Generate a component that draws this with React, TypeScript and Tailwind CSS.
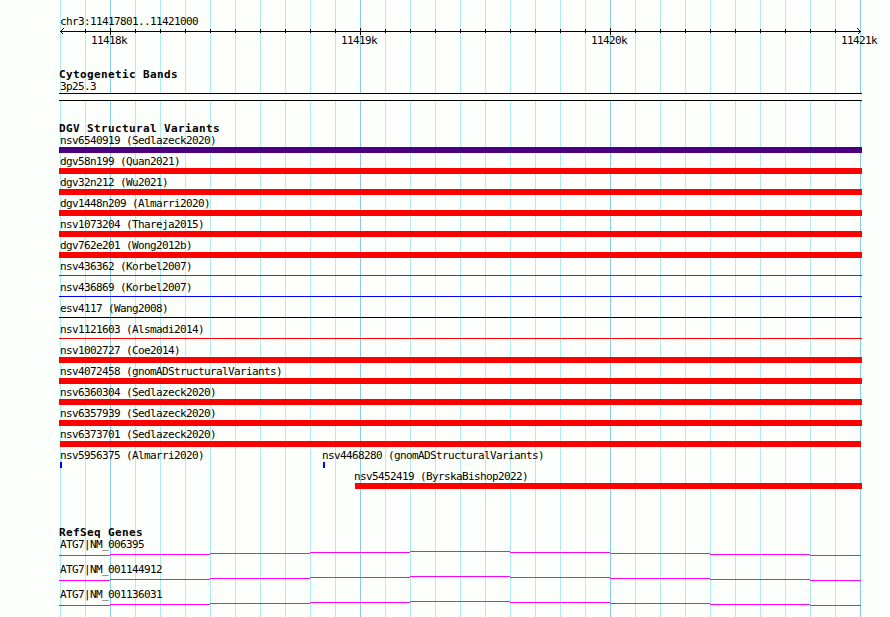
import clsx from "clsx"
import { ReactNode } from "react"

interface Variant {
	name: string
	color: string
	thin?: boolean
	bar?: string
}

const variants: Variant[] = [
	{ name: "nsv6540919 (Sedlazeck2020)", color: "bg-[#4b0082]" },
	{ name: "dgv58n199 (Quan2021)", color: "bg-[#ff0000]" },
	{ name: "dgv32n212 (Wu2021)", color: "bg-[#ff0000]" },
	{ name: "dgv1448n209 (Almarri2020)", color: "bg-[#ff0000]" },
	{ name: "nsv1073204 (Thareja2015)", color: "bg-[#ff0000]" },
	{ name: "dgv762e201 (Wong2012b)", color: "bg-[#ff0000]" },
	{ name: "nsv436362 (Korbel2007)", color: "bg-[#ff0000]", thin: true },
	{ name: "nsv436869 (Korbel2007)", color: "bg-[#0000ff]", thin: true },
	{ name: "esv4117 (Wang2008)", color: "bg-black", thin: true },
	{ name: "nsv1121603 (Alsmadi2014)", color: "bg-[#ff0000]", thin: true },
	{ name: "nsv1002727 (Coe2014)", color: "bg-[#ff0000]" },
	{ name: "nsv4072458 (gnomADStructuralVariants)", color: "bg-[#ff0000]" },
	{ name: "nsv6360304 (Sedlazeck2020)", color: "bg-[#ff0000]" },
	{ name: "nsv6357939 (Sedlazeck2020)", color: "bg-[#ff0000]" },
	{ name: "nsv6373701 (Sedlazeck2020)", color: "bg-[#ff0000]", bar: "ml-px w-[801px]" },
]

const genes = ["ATG7|NM_006395", "ATG7|NM_001144912", "ATG7|NM_001136031"]

// 25px per 100bp, every tenth line is a 1kb mark
const gridLines = Array.from({ length: 33 }, (_, i) => ({ id: i, major: i % 10 === 2 }))

export default function App() {
	return (
		<div className="relative h-[617px] w-[890px] overflow-hidden bg-[#fdfffc] font-['DejaVu_Sans_Mono',monospace] text-[11px] leading-[13px] tracking-[-0.622px] text-black">
			<Grid />
			<div className="relative flex flex-col pt-[15px] pl-[59px]">
				<Ruler />
				<Track caption="Cytogenetic Bands" className="mt-[21px]">
					<Label>3p25.3</Label>
					<div className="h-2 w-[803px] border-y border-black bg-[#fdfffc]" />
				</Track>
				<Track caption="DGV Structural Variants" className="mt-[21px]">
					{variants.map((v) => (
						<VariantRow key={v.name} variant={v} />
					))}
					<div className="flex">
						<div className="w-[262px]">
							<VariantRow variant={{ name: "nsv5956375 (Almarri2020)", color: "bg-[#0000ff]", bar: "ml-px w-0.5" }} />
						</div>
						<VariantRow
							variant={{ name: "nsv4468280 (gnomADStructuralVariants)", color: "bg-[#0000ff]", bar: "ml-0.5 w-0.5" }}
						/>
					</div>
					<div className="pl-[294px]">
						<VariantRow
							variant={{ name: "nsv5452419 (ByrskaBishop2022)", color: "bg-[#ff0000]", bar: "ml-0.5 w-[507px]" }}
						/>
					</div>
				</Track>
				<Track caption="RefSeq Genes" className="mt-[35px]">
					{genes.map((gene) => (
						<GeneRow key={gene} name={gene} />
					))}
				</Track>
			</div>
		</div>
	)
}

function Grid() {
	return (
		<div className="absolute inset-0 flex pl-[60px]">
			{gridLines.map((line) => (
				<div
					key={line.id}
					className={clsx("w-[25px] shrink-0 border-l", line.major ? "border-[#87ceeb]" : "border-[#afeeee]")}
				/>
			))}
		</div>
	)
}

function Ruler() {
	return (
		<div>
			<Label>chr3:11417801..11421000</Label>
			<svg className="block h-[7px] w-[803px]" viewBox="0 0 803 7" shapeRendering="crispEdges">
				<path d="M1 3.5H802" stroke="black" />
				{gridLines.slice(1, -1).map(({ id, major }) => (
					<rect key={id} x={1 + id * 25} y={major ? 0 : 1} width={1} height={major ? 7 : 4} />
				))}
				<path d="M4.5 0.5L1.5 3.5L4.5 6.5M798.5 0.5L801.5 3.5L798.5 6.5" fill="none" stroke="black" />
			</svg>
			<div className="-mt-px flex pl-[31px]">
				{["11418k", "11419k", "11420k", "11421k"].map((tick) => (
					<div key={tick} className="w-[250px] shrink-0">
						<Label>{tick}</Label>
					</div>
				))}
			</div>
		</div>
	)
}

function Track({ caption, className, children }: { caption: string; className: string; children: ReactNode }) {
	return (
		<section className={className}>
			<h2 className="h-3 pt-px text-[11px] leading-3 font-bold tracking-[0.378px] whitespace-nowrap">{caption}</h2>
			{children}
		</section>
	)
}

function Label({ children }: { children: ReactNode }) {
	return <div className="h-[13px] pl-px whitespace-nowrap">{children}</div>
}

function VariantRow({ variant }: { variant: Variant }) {
	return (
		<div className="h-[21px]">
			<Label>{variant.name}</Label>
			<div className={clsx(variant.thin ? "mt-0.5 h-px" : "h-1.5", variant.color, variant.bar ?? "w-[803px]")} />
		</div>
	)
}

function GeneRow({ name }: { name: string }) {
	return (
		<div className="h-[25px]">
			<Label>{name}</Label>
			<svg className="block h-[5px] w-[802px]" viewBox="0 0 802 5" shapeRendering="crispEdges">
				<path
					d="M0 4.5H51M51 3.5H151M151 2.5H251M251 1.5H351M351 0.5H451M451 1.5H551M551 2.5H651M651 3.5H751M751 4.5H802"
					stroke="#ff00ff"
				/>
			</svg>
		</div>
	)
}
